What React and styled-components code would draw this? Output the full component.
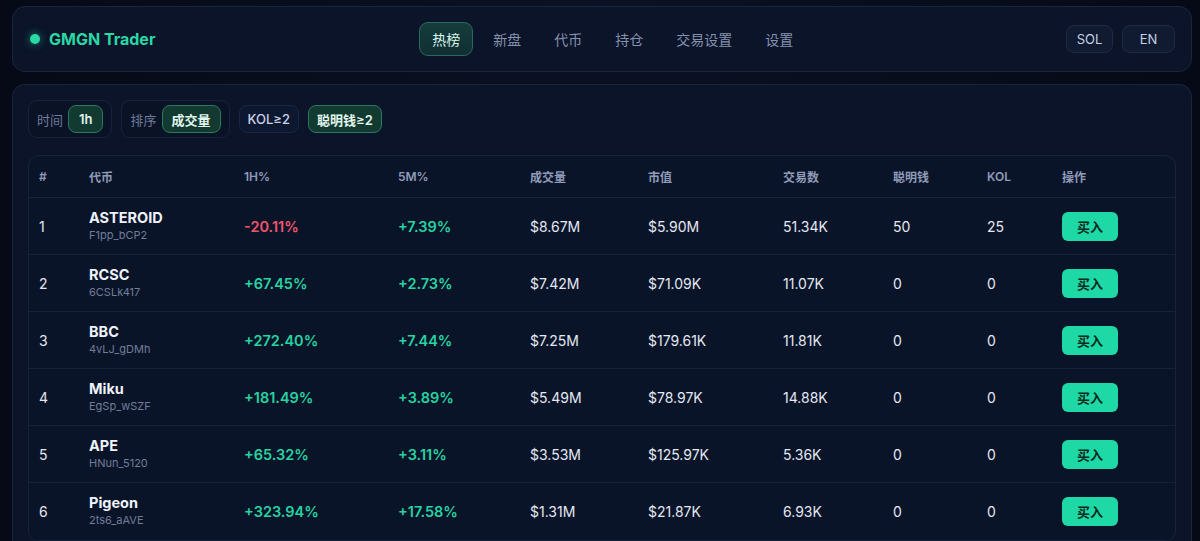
import React from "react";
import styled, { createGlobalStyle } from "styled-components";

const GlobalStyle = createGlobalStyle`
  html, body {
    margin: 0;
    padding: 0;
    background: #060a16;
    font-family: Inter, "Noto Sans CJK SC", "Noto Sans", sans-serif;
    color: #e3e8f3;
  }
  * { box-sizing: border-box; }
`;

const Page = styled.div`
  padding: 6px 8px 0 12px;
  height: 541px;
  overflow: hidden;
  display: flex;
  flex-direction: column;
  gap: 12px;
  background: radial-gradient(ellipse at 50% 0%, #0b1124 0%, #060a16 70%);
`;

const Header = styled.header`
  height: 66px;
  flex-shrink: 0;
  display: flex;
  align-items: center;
  justify-content: space-between;
  padding: 0 16px 0 17px;
  border: 1px solid #1a2540;
  border-radius: 13px;
  background: #0b1429;
`;

const Logo = styled.div`
  display: flex;
  align-items: center;
  gap: 9px;
  font-size: 16px;
  font-weight: 700;
  color: #2ad7a5;
`;

const Dot = styled.span`
  width: 10px;
  height: 10px;
  border-radius: 50%;
  background: #2ad7a5;
  box-shadow: 0 0 8px rgba(42, 215, 165, 0.6);
`;

const Nav = styled.nav`
  display: flex;
  gap: 7px;
  margin-left: 4px;
`;

const Tab = styled.div`
  height: 34px;
  padding: 0 12px;
  display: flex;
  align-items: center;
  font-size: 14px;
  border-radius: 9px;
  color: ${(p) => (p.$active ? "#d9f6ec" : "#8592ae")};
  background: ${(p) => (p.$active ? "linear-gradient(180deg, #153d3c, #112e33)" : "transparent")};
  border: 1px solid ${(p) => (p.$active ? "#2a6a5d" : "transparent")};
`;

const Right = styled.div`
  display: flex;
  gap: 9px;
`;

const SmallButton = styled.div`
  height: 28px;
  min-width: ${(p) => p.$w}px;
  display: flex;
  align-items: center;
  justify-content: center;
  font-size: 13px;
  color: #c8d1e4;
  background: #101a31;
  border: 1px solid #1e2a45;
  border-radius: 8px;
`;

const Main = styled.section`
  flex: 1;
  border: 1px solid #1a2540;
  border-bottom: none;
  border-radius: 13px 13px 0 0;
  background: #0b1429;
  padding: 15px 15px 0 15px;
  display: flex;
  flex-direction: column;
  gap: 17px;
`;

const Filters = styled.div`
  display: flex;
  align-items: center;
  gap: 9px;
`;

const Group = styled.div`
  height: 38px;
  display: flex;
  align-items: center;
  gap: 5px;
  padding: 0 8px;
  border: 1px solid #18223c;
  background: #0a1226;
  border-radius: 9px;
`;

const GroupLabel = styled.span`
  font-size: 13px;
  color: #6f7b98;
`;

const Pill = styled.div`
  height: 28px;
  padding: 0 ${(p) => p.$pad || 8}px;
  display: flex;
  align-items: center;
  font-size: 13px;
  font-weight: ${(p) => (p.$active ? 600 : 500)};
  border-radius: 8px;
  color: ${(p) => (p.$active ? "#e2f6ee" : "#c9d2e6")};
  background: ${(p) => (p.$active ? "#133a30" : "#0c1730")};
  border: 1px solid ${(p) => (p.$active ? "#2b7a60" : "#1b2742")};
`;

const Table = styled.div`
  border: 1px solid #17223b;
  border-radius: 11px;
  background: #0a1428;
  flex: 1;
  overflow: hidden;
`;

const cols = "50px 155px 154px 132px 118px 135px 110px 94px 75px 1fr";

const HeadRow = styled.div`
  display: grid;
  grid-template-columns: ${cols};
  align-items: center;
  height: 42px;
  padding-left: 10px;
  border-bottom: 1px solid #17223b;
  font-size: 12px;
  font-weight: 600;
  color: #8f9bb8;
`;

const Row = styled.div`
  display: grid;
  grid-template-columns: ${cols};
  align-items: center;
  height: 57.1px;
  padding-left: 10px;
  border-bottom: 1px solid #16213a;
  font-size: 14px;
  color: #e3e8f3;
`;

const Token = styled.div`
  display: flex;
  flex-direction: column;
  gap: 2px;
  margin-top: -2px;
`;

const TokenName = styled.span`
  font-size: 14.5px;
  font-weight: 700;
  color: #eef2fa;
`;

const TokenAddr = styled.span`
  font-size: 11px;
  color: #717d99;
`;

const Change = styled.span`
  font-size: 14.5px;
  font-weight: 600;
  color: ${(p) => (p.$neg ? "#f0566b" : "#27d3a1")};
`;

const BuyButton = styled.button`
  width: 56px;
  height: 29px;
  border: none;
  border-radius: 6px;
  background: #1ed8a5;
  color: #0a2a20;
  font-family: inherit;
  font-size: 13px;
  font-weight: 600;
`;

const rows = [
  ["ASTEROID", "F1pp_bCP2", "-20.11%", "+7.39%", "$8.67M", "$5.90M", "51.34K", "50", "25"],
  ["RCSC", "6CSLk417", "+67.45%", "+2.73%", "$7.42M", "$71.09K", "11.07K", "0", "0"],
  ["BBC", "4vLJ_gDMh", "+272.40%", "+7.44%", "$7.25M", "$179.61K", "11.81K", "0", "0"],
  ["Miku", "EgSp_wSZF", "+181.49%", "+3.89%", "$5.49M", "$78.97K", "14.88K", "0", "0"],
  ["APE", "HNun_5120", "+65.32%", "+3.11%", "$3.53M", "$125.97K", "5.36K", "0", "0"],
  ["Pigeon", "2ts6_aAVE", "+323.94%", "+17.58%", "$1.31M", "$21.87K", "6.93K", "0", "0"],
];

const tabs = ["热榜", "新盘", "代币", "持仓", "交易设置", "设置"];
const heads = ["#", "代币", "1H%", "5M%", "成交量", "市值", "交易数", "聪明钱", "KOL", "操作"];

export default function App() {
  return (
    <>
      <GlobalStyle />
      <Page>
        <Header>
          <Logo>
            <Dot />
            GMGN Trader
          </Logo>
          <Nav>
            {tabs.map((t, i) => (
              <Tab key={t} $active={i === 0}>
                {t}
              </Tab>
            ))}
          </Nav>
          <Right>
            <SmallButton $w={47}>SOL</SmallButton>
            <SmallButton $w={53}>EN</SmallButton>
          </Right>
        </Header>
        <Main>
          <Filters>
            <Group>
              <GroupLabel>时间</GroupLabel>
              <Pill $active $pad={10}>1h</Pill>
            </Group>
            <Group>
              <GroupLabel>排序</GroupLabel>
              <Pill $active $pad={9}>成交量</Pill>
            </Group>
            <Pill>KOL≥2</Pill>
            <Pill $active>聪明钱≥2</Pill>
          </Filters>
          <Table>
            <HeadRow>
              {heads.map((h) => (
                <span key={h}>{h}</span>
              ))}
            </HeadRow>
            {rows.map((r, i) => (
              <Row key={r[0]}>
                <span>{i + 1}</span>
                <Token>
                  <TokenName>{r[0]}</TokenName>
                  <TokenAddr>{r[1]}</TokenAddr>
                </Token>
                <Change $neg={r[2].startsWith("-")}>{r[2]}</Change>
                <Change $neg={r[3].startsWith("-")}>{r[3]}</Change>
                <span>{r[4]}</span>
                <span>{r[5]}</span>
                <span>{r[6]}</span>
                <span>{r[7]}</span>
                <span>{r[8]}</span>
                <div>
                  <BuyButton>买入</BuyButton>
                </div>
              </Row>
            ))}
          </Table>
        </Main>
      </Page>
    </>
  );
}
